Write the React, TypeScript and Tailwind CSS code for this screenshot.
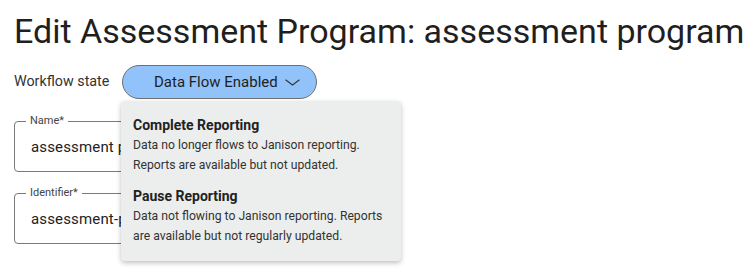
import { useState } from "react";

const options = [
    {
        title: "Complete Reporting",
        text: "Data no longer flows to Janison reporting. Reports are available but not updated.",
    },
    {
        title: "Pause Reporting",
        text: "Data not flowing to Janison reporting. Reports are available but not regularly updated.",
    },
];

function OutlinedField({ label, value }: { label: string; value: string }) {
    return (
        <div className="relative w-[300px] h-[51px] rounded-[4px] border border-[#7a7a7a] flex items-center pl-[16px]">
            <span className="absolute -top-[8px] left-[11px] px-[4px] bg-white text-[11px] leading-[14px] text-[#444]">
                {label}
            </span>
            <span className="text-[15px] leading-[24px] tracking-[0.15px] text-[#222] whitespace-nowrap">
                {value}
            </span>
        </div>
    );
}

export default function App() {
    const [open, setOpen] = useState(true);

    return (
        <div
            className="min-h-screen bg-white px-[14px] pt-[11px]"
            style={{ fontFamily: "Roboto, 'Liberation Sans', sans-serif" }}
        >
            <h1 className="text-[34px] leading-[40px] text-[#1f1f1f] whitespace-nowrap">
                Edit Assessment Program: assessment program
            </h1>

            <div className="mt-[14px] flex items-center gap-[12px]">
                <span className="w-[96px] shrink-0 whitespace-nowrap text-[14.3px] text-[#333]">
                    Workflow state
                </span>
                <div className="relative shrink-0">
                    <button
                        onClick={() => setOpen((prev) => !prev)}
                        className="w-[195px] h-[34px] rounded-full border border-[#707070] bg-[#91c3fa] flex items-center pl-[31px] pr-[25px] gap-[7px] text-[15px] text-[#1f1f1f] whitespace-nowrap"
                    >
                        <span>Data Flow Enabled</span>
                        <svg className="shrink-0" width="15" height="7" viewBox="0 0 15 7" fill="none">
                            <path d="M0.5 0.8 L7.5 6 L14.5 0.8" stroke="#333" strokeWidth="1.1" />
                        </svg>
                    </button>
                    {open && (
                        <div className="absolute z-10 top-[36px] -left-[1px] w-[280px] rounded-[4px] bg-[#ebeeed] shadow-[0_2px_5px_rgba(0,0,0,0.25)] px-[12px] pt-[14px] pb-[15px] flex flex-col gap-[11px]">
                            {options.map((o) => (
                                <div key={o.title}>
                                    <div className="text-[14px] leading-[20px] font-bold text-[#222]">
                                        {o.title}
                                    </div>
                                    <p className="text-[12.2px] leading-[20px] text-[#333]">{o.text}</p>
                                </div>
                            ))}
                        </div>
                    )}
                </div>
            </div>

            <div className="mt-[22px] flex flex-col gap-[21px]">
                <OutlinedField label="Name*" value="assessment program" />
                <OutlinedField label="Identifier*" value="assessment-program" />
            </div>
        </div>
    );
}
